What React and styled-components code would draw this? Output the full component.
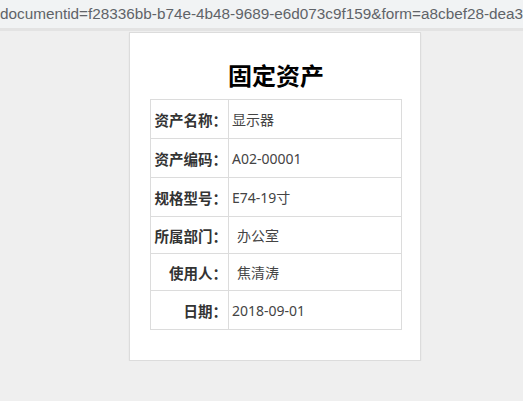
import React from "react";
import styled, { createGlobalStyle } from "styled-components";

const GlobalStyle = createGlobalStyle`
  html, body {
    margin: 0;
    padding: 0;
    background: #efefef;
    font-family: "Noto Sans", "Noto Sans CJK SC", sans-serif;
  }
`;

const AddressBar = styled.div`
  height: 28px;
  background: #f1f3f4;
  border-bottom: 3px solid #e3e3e3;
  color: #5f6368;
  font-family: "Liberation Sans", Arial, sans-serif;
  font-size: 15.3px;
  line-height: 28px;
  white-space: nowrap;
  overflow: hidden;
`;

const Page = styled.div`
  padding-top: 1px;
`;

const Card = styled.div`
  width: 252px;
  margin-left: 129px;
  background: #fff;
  border: 1px solid #dcdcdc;
  padding: 0 18px 30px 20px;
  box-shadow: 0 1px 2px rgba(0, 0, 0, 0.05);
`;

const Title = styled.h2`
  margin: 0 0 10px;
  padding-top: 28px;
  font-family: "Noto Sans CJK SC", sans-serif;
  font-size: 24px;
  line-height: 28px;
  font-weight: bold;
  color: #000;
  text-align: center;
`;

const Table = styled.table`
  width: 252px;
  border-collapse: collapse;
  border: 1px solid #dcdcdc;
`;

const Row = styled.tr`
  height: ${(p) => p.$h}px;
`;

const LabelCell = styled.td`
  width: 76px;
  padding: 0 1px 0 0;
  border: 1px solid #dcdcdc;
  text-align: right;
  font-family: "Noto Sans CJK SC", sans-serif;
  font-size: 14.5px;
  font-weight: bold;
  color: #333;
  white-space: nowrap;
`;

const ValueCell = styled.td`
  padding: 0 0 0 ${(p) => (p.$indent ? 8 : 3)}px;
  border: 1px solid #dcdcdc;
  font-family: "Noto Sans", "Noto Sans CJK SC", sans-serif;
  font-size: 14px;
  color: #444;
`;

const rows = [
  { label: "资产名称：", value: "显示器", h: 39 },
  { label: "资产编码：", value: "A02-00001", h: 39 },
  { label: "规格型号：", value: "E74-19寸", h: 39 },
  { label: "所属部门：", value: "办公室", h: 37, indent: true },
  { label: "使用人：", value: "焦清涛", h: 37, indent: true },
  { label: "日期：", value: "2018-09-01", h: 39 },
];

const App = () => {
  return (
    <>
      <GlobalStyle />
      <AddressBar>
        documentid=f28336bb-b74e-4b48-9689-e6d073c9f159&amp;form=a8cbef28-dea3
      </AddressBar>
      <Page>
        <Card>
          <Title>固定资产</Title>
          <Table>
            <tbody>
              {rows.map((r) => (
                <Row key={r.label} $h={r.h}>
                  <LabelCell>{r.label}</LabelCell>
                  <ValueCell $indent={r.indent}>{r.value}</ValueCell>
                </Row>
              ))}
            </tbody>
          </Table>
        </Card>
      </Page>
    </>
  );
};

export default App;
